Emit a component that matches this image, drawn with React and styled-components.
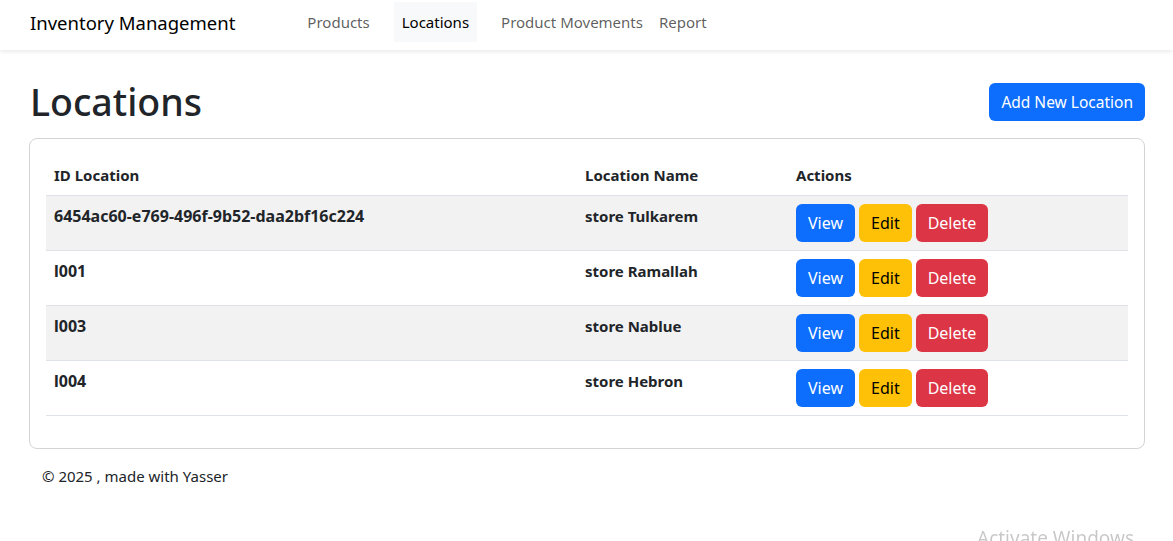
import styled, { createGlobalStyle } from "styled-components";

const GlobalStyle = createGlobalStyle`
  body {
    margin: 0;
    font-family: "Noto Sans", "Open Sans", sans-serif;
    font-size: 15px;
    color: #212529;
    background: #fff;
  }
  * { box-sizing: border-box; }
`;

const Navbar = styled.nav`
  height: 50px;
  display: flex;
  align-items: center;
  padding: 0 30px;
  background: #fff;
  box-shadow: 0 2px 4px rgba(0, 0, 0, 0.08);
`;

const Brand = styled.div`
  font-size: 18.5px;
  color: #000;
  margin-right: 64px;
  margin-top: -5px;
`;

const NavList = styled.div`
  display: flex;
  align-self: flex-start;
  margin-top: 2px;
`;

const NavLink = styled.a`
  display: block;
  height: 40px;
  line-height: 40px;
  padding: 0 8px;
  margin-right: ${({ $gap }) => $gap}px;
  font-size: 15px;
  color: ${({ $active }) => ($active ? "#000" : "rgba(0,0,0,0.65)")};
  background: ${({ $active }) => ($active ? "#f8f9fa" : "transparent")};
  text-decoration: none;
`;

const Main = styled.main`
  padding: 0 28px 0 29px;
`;

const Header = styled.div`
  display: flex;
  align-items: center;
  justify-content: space-between;
  margin-top: 28px;
  margin-bottom: 12px;
  padding-left: 1px;
`;

const Title = styled.h1`
  margin: 0;
  font-size: 37.5px;
  font-weight: 500;
  line-height: 48px;
`;

const Button = styled.button`
  border: none;
  border-radius: 6px;
  font-family: inherit;
  font-size: ${({ $size }) => $size || 16}px;
  height: 38px;
  padding: 0 12px;
  cursor: pointer;
  color: ${({ $variant }) => ($variant === "warning" ? "#000" : "#fff")};
  background: ${({ $variant }) =>
    $variant === "warning" ? "#ffc107" : $variant === "danger" ? "#dc3545" : "#0d6efd"};
`;

const Card = styled.div`
  border: 1px solid #d4d4d4;
  border-radius: 8px;
  padding: 16px 16px 32px;
`;

const Table = styled.table`
  width: 100%;
  border-collapse: collapse;

  th, td {
    text-align: left;
    vertical-align: top;
    padding: 8px;
    line-height: 24px;
    font-size: 15px;
    font-weight: 700;
    border-bottom: 1px solid #dee2e6;
  }

  td:first-child {
    font-size: 16px;
  }

  tbody tr:nth-child(odd) td {
    background: #f2f2f2;
  }
`;

const Actions = styled.div`
  display: flex;
  gap: 4px;
`;

const Footer = styled.footer`
  padding: 17px 42px;
  font-size: 15px;
`;

const Watermark = styled.div`
  position: fixed;
  left: 977px;
  top: 525px;
  font-size: 19px;
  color: rgba(0, 0, 0, 0.22);
  pointer-events: none;
`;

const rows = [
  { id: "6454ac60-e769-496f-9b52-daa2bf16c224", name: "store Tulkarem" },
  { id: "l001", name: "store Ramallah" },
  { id: "l003", name: "store Nablue" },
  { id: "l004", name: "store Hebron" },
];

export default function App() {
  return (
    <>
      <GlobalStyle />
      <Navbar>
        <Brand>Inventory Management</Brand>
        <NavList>
          <NavLink href="#" $gap={16}>Products</NavLink>
          <NavLink href="#" $gap={16} $active>Locations</NavLink>
          <NavLink href="#" $gap={0}>Product Movements</NavLink>
          <NavLink href="#" $gap={0}>Report</NavLink>
        </NavList>
      </Navbar>
      <Main>
        <Header>
          <Title>Locations</Title>
          <Button $size={15.5}>Add New Location</Button>
        </Header>
        <Card>
          <Table>
            <colgroup>
              <col style={{ width: "531px" }} />
              <col style={{ width: "211px" }} />
              <col />
            </colgroup>
            <thead>
              <tr>
                <th>ID Location</th>
                <th>Location Name</th>
                <th>Actions</th>
              </tr>
            </thead>
            <tbody>
              {rows.map((r) => (
                <tr key={r.id}>
                  <td>{r.id}</td>
                  <td>{r.name}</td>
                  <td>
                    <Actions>
                      <Button>View</Button>
                      <Button $variant="warning">Edit</Button>
                      <Button $variant="danger">Delete</Button>
                    </Actions>
                  </td>
                </tr>
              ))}
            </tbody>
          </Table>
        </Card>
      </Main>
      <Footer>© 2025 , made with Yasser</Footer>
      <Watermark>Activate Windows</Watermark>
    </>
  );
}
